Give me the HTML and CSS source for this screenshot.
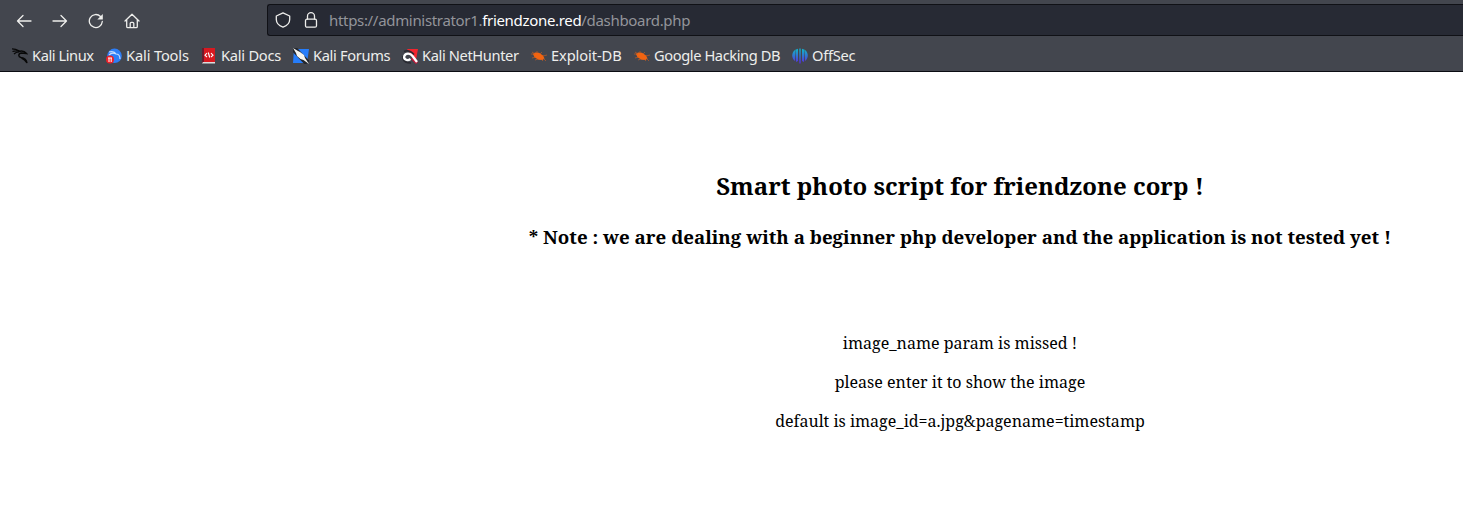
FILE: index.html
```
<!DOCTYPE html>
<html lang="en">
<head>
<meta charset="utf-8">
<title>Dashboard</title>
<link rel="stylesheet" href="styles.css">
</head>
<body>
<header class="chrome">
  <nav class="toolbar">
    <div class="controls">
      <svg viewBox="0 0 16 16"><path d="M15 8H1.500M7 2.500 1.500 8 7 13.500"/></svg>
      <svg viewBox="0 0 16 16"><path d="M1 8h13.500M9 2.500 14.500 8 9 13.500"/></svg>
      <svg viewBox="0 0 16 16"><path d="M14.300 8.500A6.500 6.500 0 1 1 12.500 3.500"/><path class="solid" d="M14.800 1v5.500H9.300z"/></svg>
      <svg viewBox="0 0 16 16"><path d="M1 8 8 1.300 15 8M2.700 6.800v6.700q0 1.200 1.200 1.200h8.200q1.200 0 1.200-1.200V6.800M6.200 14.500v-4q0-1.200 1.200-1.200h1.200q1.200 0 1.200 1.200v4"/></svg>
    </div>
    <div class="address">
      <svg viewBox="0 0 16 16"><path d="M8 .8 14.700 4v3.500c0 3.300-3 6.300-6.700 7.700-3.700-1.400-6.700-4.400-6.700-7.700V4z"/></svg>
      <svg viewBox="0 0 16 16"><rect x="2.500" y="7.200" width="11" height="8" rx="1.500"/><path d="M4.500 7V4.200a3.500 3.500 0 0 1 7 0V7"/></svg>
      <span class="url">https://administrator1.<b>friendzone.red</b>/dashboard.php</span>
    </div>
  </nav>
  <nav class="bookmarks">
    <a class="linux"><svg viewBox="0 0 16 16"><path class="dragon" d="M0 .8c3 0 5 .8 7.500 2.200M.5 3.500c2-.8 4-.8 6.500-.5M2 6c1.500-1.600 3-2 5-2"/><path class="dragon body" d="M6.500 3.500c3.500-1 6-.5 8 2-2-.5-3.500-.5-5-.5-3.500.3-3.500 4-.5 4.500 3.500.5 5.500 2 6 5.500-1.500-2.500-3-4-5.500-5"/></svg><span>Kali Linux</span></a>
    <a class="tools"><svg viewBox="0 0 16 16"><circle cx="8.500" cy="7.800" r="7.300" fill="#2d7ef7"/><path d="M3 4c4-1 6 0 7 2 3 0 4 2 4 5M3 7c2-2 5-2 7-1" fill="none" stroke="#c5dcff" stroke-width="1.200"/><circle cx="4" cy="11.500" r="4" fill="#ed2028"/><path d="M2 10h4M3 10v4M5.200 10v4" stroke="#fff"/></svg><span>Kali Tools</span></a>
    <a class="docs"><svg viewBox="0 0 16 16"><path fill="#d81920" d="M2 0h12v14H2z"/><path fill="#6d1b2c" d="M1 0h2v15H1z"/><path fill="#ddd" d="M2 14h12v1.500H1z"/><path d="m6 5-2 2.300L6 9M10 5l2 2.300L10 9M7.300 4.500 8.700 9.500" fill="none" stroke="#fff" stroke-width="1.100"/></svg><span>Kali Docs</span></a>
    <a class="forums"><svg viewBox="0 0 16 16"><path fill="#267dfa" d="M1 1h15l-2 14H0z"/><path d="M0 0 10.500 11l4 4" stroke="#24272e" stroke-width="6"/><path fill="#f5f5f0" d="m0 0 5 3 2 1 4 3 1 3 4 6-5.500-4-3-1-3.500-3-1-3z"/></svg><span>Kali Forums</span></a>
    <a class="nethunter"><svg viewBox="0 0 16 16"><path fill="#f3252e" d="M5 1h11l-2 11-4-4z"/><path d="M2 3.500c4-2 7-.5 10 3M1 8v3c1 3 4 4 8 4" fill="none" stroke="#292a31" stroke-width="1.500"/><path d="m10 10 5 5" stroke="#c51638" stroke-width="3"/><path d="M15 14 10.500 8C8 4.500 3.500 5 2.300 8c-1 3 2.500 5.500 6.200 3" fill="none" stroke="#fff" stroke-width="2.300"/></svg><span>Kali NetHunter</span></a>
    <a class="exploit"><svg viewBox="0 0 16 16"><path class="bug" d="m2 6 2-1.500 4 .2 4 2.800 1.500 3-2 1.500-4-.2-4-2.500z"/><path class="legs" d="M0 6h4L1 4M6 5V3M9 6l2-2M12 8l4-1M12 10l3 3M5 9l-4 1M7 11l-3 1M10 11l2 2"/></svg><span>Exploit-DB</span></a>
    <a class="hacking"><svg viewBox="0 0 16 16"><path class="bug" d="m2 6 2-1.500 4 .2 4 2.800 1.500 3-2 1.500-4-.2-4-2.500z"/><path class="legs" d="M0 6h4L1 4M6 5V3M9 6l2-2M12 8l4-1M12 10l3 3M5 9l-4 1M7 11l-3 1M10 11l2 2"/></svg><span>Google Hacking DB</span></a>
    <a class="offsec"><svg viewBox="0 0 16 16"><defs><linearGradient id="sec" gradientUnits="userSpaceOnUse" x1="0" y1="0" x2="0" y2="16"><stop offset=".15" stop-color="#16a9ca"/><stop offset="1" stop-color="#5b24df"/></linearGradient></defs><path fill="url(#sec)" d="M3 2v11C-.7 10.500-.7 4.500 3 2zM3.300 1.800 6 .7V13l-2 1zM7.300.5h1.400V15.500H7.300zM10 .7l2.700 1.100L12 14l-2-1zM13 2c3.700 2.500 3.700 8.500 0 11z"/></svg><span>OffSec</span></a>
  </nav>
</header>
<div class="viewport">
<main class="page">
  <h2>Smart photo script for friendzone corp !</h2>
  <h3>* Note : we are dealing with a beginner php developer and the application is not tested yet !</h3>
  <p class="missing">image_name param is missed !</p>
  <p>please enter it to show the image</p>
  <p>default is image_id=a.jpg&amp;pagename=timestamp</p>
</main>
</div>
</body>
</html>
```
FILE: styles.css
```
* { box-sizing: border-box; }
body { margin: 0; background: #fff; overflow: hidden; height: 508px; }
.chrome { height: 72px; background: #43464e; border-bottom: 1px solid #0b0c12; font-family: "Noto Sans", sans-serif; color: #eeeeec; overflow: hidden; }
svg { display: block; width: 16px; height: 16px; flex: none; }
.toolbar { height: 40px; display: flex; }
.controls { width: 267px; padding-left: 16px; display: flex; gap: 20px; align-items: center; height: 41px; }
.controls svg, .address svg { fill: none; stroke: #eeeeec; stroke-width: 1.3; stroke-linecap: round; stroke-linejoin: round; }
.controls .solid { fill: #eeeeec; stroke: none; }
.address { margin-top: 4px; flex: 1; height: 32px; border: 1px solid #101116; border-right: 0; border-radius: 3px 0 0 3px; background: #272a34; display: flex; align-items: center; padding-left: 7px; gap: 12px; }
.url { font-size: 15px; letter-spacing: -.32px; line-height: 20px; color: #93949a; white-space: nowrap; margin-left: -2px; }
.url b { color: #fff; font-weight: 400; }
.bookmarks { height: 32px; display: grid; grid-template-columns: 94px 95px 92px 109px 129px 103px 158px 80px; padding-left: 12px; }
.bookmarks a { display: flex; align-items: center; gap: 4px; font-size: 14.67px; line-height: 20px; white-space: nowrap; }
.bookmarks span { padding-bottom: 2px; }
.linux { letter-spacing: -.43px; }
.tools { letter-spacing: -.15px; }
.docs { letter-spacing: -.25px; }
.forums { letter-spacing: -.34px; }
.nethunter { letter-spacing: -.38px; }
.exploit { letter-spacing: -.1px; }
.hacking { letter-spacing: -.41px; }
.offsec { letter-spacing: -.27px; }
.dragon { fill: none; stroke: #080808; stroke-width: 1.2; }
.dragon.body { stroke-width: 1.4; }
.bug { fill: #f26411; }
.legs { fill: none; stroke: #d45e1c; stroke-width: .6; }
.viewport { height: 436px; overflow: hidden; }
.page { width: 1920px; padding-top: 97px; text-align: center; color: #000; font-family: "Noto Serif", "DejaVu Serif", serif; white-space: nowrap; }
.page h2 { margin: 0; font-size: 24px; line-height: 33px; }
.page h3 { margin: 22px 0 0; font-size: 18.72px; line-height: 25px; }
.page p { margin: 0 0 17px; font-size: 16px; line-height: 22px; }
.page .missing { margin-top: 83px; }
```
